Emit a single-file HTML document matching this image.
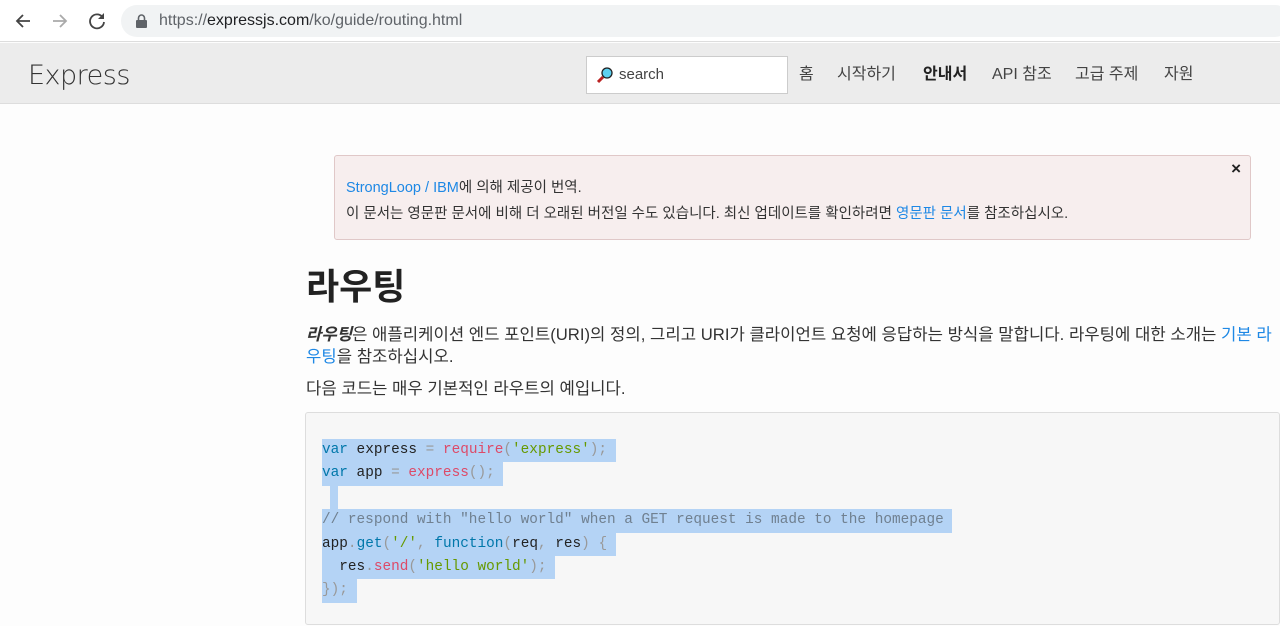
<!DOCTYPE html>
<html><head><meta charset="utf-8"><style>
*{margin:0;padding:0;box-sizing:border-box}
body{width:1280px;height:626px;overflow:hidden;background:#fdfdfd;font-family:"Liberation Sans","Noto Sans CJK KR",sans-serif;color:#333;position:relative}
.chrome{position:absolute;left:0;top:0;width:1280px;height:42px;background:#fff;border-bottom:1px solid #ddd}
.url{position:absolute;left:121px;top:5px;width:1170px;height:32px;border-radius:16px;background:#f1f3f4;font-size:16px;color:#202124;padding:7px 0 0 38px}
.url .g{color:#5f6368}
.nav{position:absolute;left:0;top:43px;width:1280px;height:61px;background:#ececec;border-bottom:1px solid #ddd}
.logo{position:absolute;left:28px;top:17px;font-size:27px;color:#333;font-family:"DejaVu Sans","Liberation Sans",sans-serif;font-weight:200;letter-spacing:-0.5px}
.search{position:absolute;left:586px;top:13px;width:202px;height:38px;background:#fff;border:1px solid #ccc;font-size:15px;color:#444;padding:9px 0 0 32px}
.menu{position:absolute;top:17px;font-size:16px;color:#444;white-space:nowrap}
.alert{position:absolute;left:334px;top:155px;width:917px;height:85px;background:#f7eeee;border:1px solid #e0c8c8;border-radius:3px;font-size:14.5px;color:#333}
a{color:#1e88e5;text-decoration:none}
h1{position:absolute;left:306px;top:258px;font-size:36px;font-weight:bold;color:#222}
.p{position:absolute;left:306px;font-size:16.7px;line-height:22px;white-space:nowrap;color:#333}
pre{position:absolute;left:305px;top:412px;width:975px;height:213px;background:#f7f7f7;border:1px solid #ddd;border-radius:3px;font-family:"Liberation Mono",monospace;font-size:14.4px;line-height:23.4px;padding:26px 0 0 16px;color:#222}
.l{background:#b4d3f5;display:inline-block;height:23.4px;vertical-align:top}
.k{color:#07a}.f{color:#dd4a68}.s{color:#690}.c{color:#708090}.pn{color:#999}
</style></head><body>
<div class="chrome">
<svg style="position:absolute;left:14px;top:12px" width="18" height="18" viewBox="0 0 18 18"><path d="M16 9H3M9 3L3 9l6 6" stroke="#444" stroke-width="1.8" fill="none"/></svg>
<svg style="position:absolute;left:51px;top:12px" width="18" height="18" viewBox="0 0 18 18"><path d="M2 9h13M9 3l6 6-6 6" stroke="#aaa" stroke-width="1.8" fill="none"/></svg>
<svg style="position:absolute;left:87px;top:11px" width="20" height="20" viewBox="0 0 20 20"><path d="M15.5 6A7 7 0 1 0 17 11" stroke="#444" stroke-width="1.8" fill="none"/><path d="M17 2v6h-6z" fill="#444"/></svg>
<div class="url"><svg style="position:absolute;left:15px;top:9px" width="11" height="14" viewBox="0 0 11 14"><rect x="0" y="6" width="11" height="8" rx="1" fill="#5f6368"/><path d="M2.5 6V4a3 3 0 0 1 6 0v2" stroke="#5f6368" stroke-width="1.6" fill="none"/></svg><span class="g">https://</span>expressjs.com<span class="g">/ko/guide/routing.html</span></div>
</div>
<div class="nav">
<div class="logo">Express</div>
<div class="search"><svg style="position:absolute;left:9px;top:9px" width="18" height="18" viewBox="0 0 18 18"><path d="M2 16l5-5" stroke="#b22" stroke-width="3"/><circle cx="11" cy="7" r="5" fill="#5cd0f0" stroke="#222" stroke-width="1.3"/></svg>search</div>
<div class="menu" style="left:799px">홈</div>
<div class="menu" style="left:837px">시작하기</div>
<div class="menu" style="left:923px;font-weight:bold;color:#222">안내서</div>
<div class="menu" style="left:992px">API 참조</div>
<div class="menu" style="left:1075px">고급 주제</div>
<div class="menu" style="left:1164px">자원</div>
</div>
<div class="alert">
<div style="position:absolute;left:11px;top:20px"><a>StrongLoop / IBM</a>에 의해 제공이 번역.</div>
<div style="position:absolute;left:11px;top:46px;white-space:nowrap">이 문서는 영문판 문서에 비해 더 오래된 버전일 수도 있습니다. 최신 업데이트를 확인하려면 <a>영문판 문서</a>를 참조하십시오.</div>
<div style="position:absolute;right:9px;top:3px;font-size:17px;font-weight:bold;color:#222">×</div>
</div>
<h1>라우팅</h1>
<div class="p" style="top:324px"><b><i>라우팅</i></b>은 애플리케이션 엔드 포인트(URI)의 정의, 그리고 URI가 클라이언트 요청에 응답하는 방식을 말합니다. 라우팅에 대한 소개는 <a>기본 라</a><br><a>우팅</a>을 참조하십시오.</div>
<div class="p" style="top:378px">다음 코드는 매우 기본적인 라우트의 예입니다.</div>
<pre><span class="l"><span class="k">var</span> express <span class="pn">=</span> <span class="f">require</span><span class="pn">(</span><span class="s">'express'</span><span class="pn">);</span> </span>
<span class="l"><span class="k">var</span> app <span class="pn">=</span> <span class="f">express</span><span class="pn">();</span> </span>
<span class="l" style="margin-left:8px;width:8px"></span>
<span class="l"><span class="c">// respond with "hello world" when a GET request is made to the homepage</span> </span>
<span class="l">app<span class="pn">.</span><span class="k">get</span><span class="pn">(</span><span class="s">'/'</span><span class="pn">,</span> <span class="k">function</span><span class="pn">(</span>req<span class="pn">,</span> res<span class="pn">)</span> <span class="pn">{</span> </span>
<span class="l">  res<span class="pn">.</span><span class="f">send</span><span class="pn">(</span><span class="s">'hello world'</span><span class="pn">);</span> </span>
<span class="l"><span class="pn">});</span> </span></pre>
</body></html>
